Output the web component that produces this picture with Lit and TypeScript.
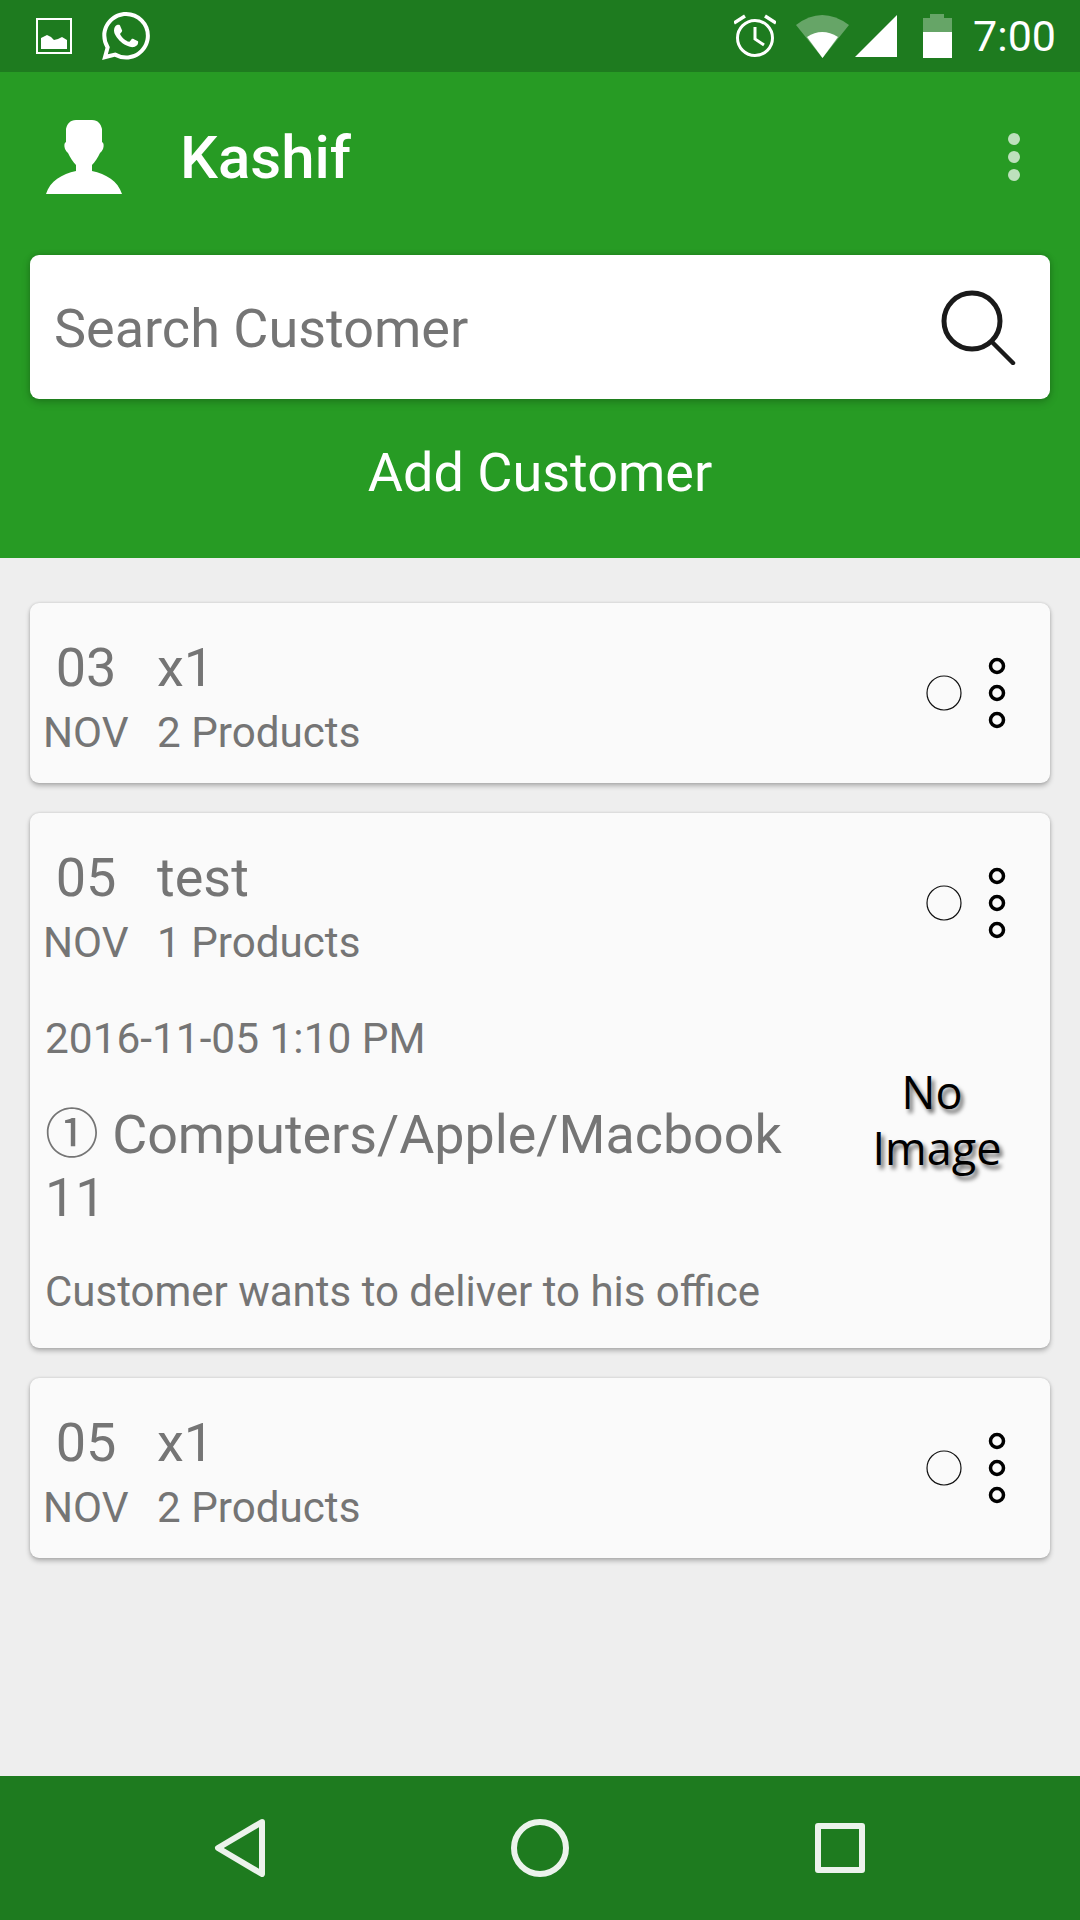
import { css, html, LitElement, svg } from 'lit';
import { customElement } from 'lit/decorators.js';

interface Order {
  day: string;
  month: string;
  name: string;
  products: string;
  expanded?: boolean;
}

const ORDERS: Order[] = [
  { day: '03', month: 'NOV', name: 'x1', products: '2 Products' },
  { day: '05', month: 'NOV', name: 'test', products: '1 Products', expanded: true },
  { day: '05', month: 'NOV', name: 'x1', products: '2 Products' },
];

const WHATSAPP = 'M17.472 14.382c-.297-.149-1.758-.867-2.03-.967-.273-.099-.471-.148-.67.15-.197.297-.767.966-.94 1.164-.173.199-.347.223-.644.075-.297-.15-1.255-.463-2.39-1.475-.883-.788-1.48-1.761-1.653-2.059-.173-.297-.018-.458.13-.606.134-.133.298-.347.446-.52.149-.174.198-.298.298-.497.099-.198.05-.371-.025-.52-.075-.149-.669-1.612-.916-2.207-.242-.579-.487-.5-.669-.51-.173-.008-.371-.01-.57-.01-.198 0-.52.074-.792.372-.272.297-1.04 1.016-1.04 2.479 0 1.462 1.065 2.875 1.213 3.074.149.198 2.096 3.2 5.077 4.487.709.306 1.262.489 1.694.625.712.227 1.36.195 1.871.118.571-.085 1.758-.719 2.006-1.413.248-.694.248-1.289.173-1.413-.074-.124-.272-.198-.57-.347m-5.421 7.403h-.004a9.87 9.87 0 01-5.031-1.378l-.361-.214-3.741.982.998-3.648-.235-.374a9.86 9.86 0 01-1.51-5.26c.001-5.45 4.436-9.884 9.888-9.884 2.64 0 5.122 1.03 6.988 2.898a9.825 9.825 0 012.893 6.994c-.003 5.45-4.437 9.884-9.885 9.884m8.413-18.297A11.815 11.815 0 0012.05 0C5.495 0 .16 5.335.157 11.892c0 2.096.547 4.142 1.588 5.945L.057 24l6.305-1.654a11.882 11.882 0 005.683 1.448h.005c6.554 0 11.89-5.335 11.893-11.893a11.821 11.821 0 00-3.48-8.413z';

@customElement('app-root')
export class AppRoot extends LitElement {
  static styles = css`
    :host {
      display: flex;
      flex-direction: column;
      height: 1920px;
      background: #eeeeee;
      font-family: Roboto, sans-serif;
      color: #757575;
    }
    svg {
      display: block;
      flex: none;
    }
    .status {
      height: 72px;
      display: flex;
      align-items: center;
      padding: 0 24px 0 36px;
      background: #1e7b1f;
      color: #fff;
    }
    .status .whatsapp {
      margin-left: 30px;
    }
    .status .right {
      margin-left: auto;
      display: flex;
      align-items: center;
    }
    .status .wifi {
      margin-left: 20px;
    }
    .status .signal {
      margin-left: 6px;
    }
    .status .battery {
      margin-left: 26px;
    }
    .time {
      margin-left: 21px;
      font-size: 43px;
      line-height: 72px;
    }
    .header {
      height: 486px;
      box-sizing: border-box;
      background: #279b24;
      padding: 0 30px;
      color: #fff;
    }
    .toolbar {
      height: 170px;
      display: flex;
      align-items: center;
      padding-left: 16px;
      margin-bottom: 13px;
    }
    .title {
      margin-left: 58px;
      font-size: 60px;
      font-weight: 500;
    }
    .overflow {
      margin-left: auto;
      margin-right: 30px;
    }
    .search {
      height: 144px;
      display: flex;
      align-items: center;
      padding: 0 34px 0 24px;
      background: #fff;
      border-radius: 9px;
      box-shadow: 0 3px 8px rgba(0, 0, 0, 0.22), 0 -1px 5px rgba(0, 0, 0, 0.1);
      color: #757575;
      font-size: 54px;
    }
    .search span {
      padding-top: 3px;
    }
    .search svg {
      margin-left: auto;
    }
    .add {
      height: 147px;
      display: flex;
      align-items: center;
      justify-content: center;
      font-size: 54px;
    }
    .list {
      flex: 1;
      display: flex;
      flex-direction: column;
      gap: 30px;
      padding: 45px 30px 0;
    }
    .card {
      background: #fafafa;
      border-radius: 9px;
      box-shadow: 0 3px 5px rgba(0, 0, 0, 0.25), 0 0 3px rgba(0, 0, 0, 0.14);
    }
    .head {
      height: 180px;
      display: flex;
      align-items: center;
      padding: 0 44px 0 13px;
    }
    .summary {
      display: grid;
      grid-template-columns: 84px auto;
      column-gap: 30px;
      margin-top: 13px;
      line-height: 65px;
    }
    .big {
      font-size: 54px;
    }
    .day {
      padding-left: 2px;
    }
    .small {
      font-size: 42.2px;
    }
    .center {
      text-align: center;
    }
    .actions {
      margin-left: auto;
      display: flex;
      align-items: center;
      gap: 26px;
    }
    .detail {
      display: flex;
      padding: 0 18px 34px 15px;
    }
    .detail-text {
      flex: 1;
      min-width: 0;
    }
    .stamp {
      margin-top: 24px;
      font-size: 42.4px;
      line-height: 44px;
    }
    .product {
      margin-top: 42px;
      font-family: Roboto, "Noto Sans CJK JP", sans-serif;
      font-size: 53.8px;
      line-height: 63px;
    }
    .note {
      margin-top: 41px;
      font-size: 42px;
      line-height: 44px;
    }
    .no-image {
      width: 190px;
      padding-top: 71px;
      text-align: center;
      font-family: "Open Sans", sans-serif;
      font-size: 45px;
      line-height: 56px;
      color: #000;
      text-shadow: 3px 4px 4px rgba(0, 0, 0, 0.6);
    }
    .no-image span {
      display: block;
      padding-right: 10px;
    }
    .nav {
      height: 144px;
      background: #1e7b1f;
      display: flex;
      align-items: center;
      padding-left: 214px;
    }
    .nav .home {
      margin-left: 245px;
    }
    .nav .recents {
      margin-left: 246px;
    }
  `;

  private _renderActions() {
    return html`
      <div class="actions">
        <svg width="36" height="36" viewBox="0 0 36 36"><circle cx="18" cy="18" r="17" fill="none" stroke="#111" stroke-width="1.2"/></svg>
        <svg width="18" height="72" viewBox="0 0 18 72" fill="none" stroke="#000" stroke-width="3.5">
          <circle cx="9" cy="9" r="6.5"/>
          <circle cx="9" cy="36" r="6.5"/>
          <circle cx="9" cy="63" r="6.5"/>
        </svg>
      </div>
    `;
  }

  private _renderOrder(order: Order) {
    return html`
      <div class="card">
        <div class="head">
          <div class="summary">
            <div class="big center day">${order.day}</div>
            <div class="big">${order.name}</div>
            <div class="small center">${order.month}</div>
            <div class="small">${order.products}</div>
          </div>
          ${this._renderActions()}
        </div>
        ${order.expanded ? html`
          <div class="detail">
            <div class="detail-text">
              <div class="stamp">2016-11-05 1:10 PM</div>
              <div class="product">① Computers/Apple/Macbook 11</div>
              <div class="note">Customer wants to deliver to his office</div>
            </div>
            <div class="no-image"><span>No</span>Image</div>
          </div>
        ` : ''}
      </div>
    `;
  }

  private _renderStatus() {
    return html`
      <div class="status">
        <svg width="36" height="36" viewBox="0 0 36 36">
          <rect x="1" y="1" width="34" height="34" fill="none" stroke="#fff" stroke-width="2"/>
          <path fill="#fff" d="M5 31V20l6-3 4 2 3 3 4-1 4-2 5 3v9z"/>
        </svg>
        <svg class="whatsapp" width="48" height="48" viewBox="0 0 24 24" fill="#fff">${svg`<path d=${WHATSAPP}/>`}</svg>
        <div class="right">
          <svg width="42" height="44" viewBox="0 0 42 44" fill="none" stroke="#fff">
            <circle cx="21" cy="24" r="17.5" stroke-width="3"/>
            <path d="M21 13v12l9 6" stroke-width="3"/>
            <path d="M0 9 11 2M42 9 31 2" stroke-width="3.5"/>
          </svg>
          <svg class="wifi" width="53" height="43" viewBox="0 0 53 43" fill="#fff">
            <path opacity="0.32" d="M0 10Q26-10 53 10L26.500 43z"/>
            <path d="M11 22Q26 12 42 22L26.500 43z"/>
          </svg>
          <svg class="signal" width="42" height="42" viewBox="0 0 42 42" fill="#fff"><path d="M0 42 42 0v42z"/></svg>
          <svg class="battery" width="29" height="44" viewBox="0 0 29 44" fill="#fff">
            <path opacity="0.32" d="M7 0h14v4h8v14H0V4h7z"/>
            <path d="M0 18h29v26H0z"/>
          </svg>
          <div class="time">7:00</div>
        </div>
      </div>
    `;
  }

  render() {
    return html`
      ${this._renderStatus()}
      <div class="header">
        <div class="toolbar">
          <svg width="76" height="74" viewBox="0 0 76 74" fill="#fff">
            <path d="M30 0h16c6 0 9 4 10 9v13c2 1 2 4 1 7-1 2-2 3-3 4-2 4-5 9-8 12v6c14 3 26 10 30 23H0c4-13 16-20 30-23v-6c-3-3-6-8-8-12-1-1-2-2-3-4-1-3-1-6 1-7V9c1-5 4-9 10-9z"/>
          </svg>
          <div class="title">Kashif</div>
          <svg class="overflow" width="12" height="48" viewBox="0 0 12 48" fill="#fff" fill-opacity="0.7">
            <circle cx="6" cy="6" r="6"/><circle cx="6" cy="24" r="6"/><circle cx="6" cy="42" r="6"/>
          </svg>
        </div>
        <div class="search">
          <span>Search Customer</span>
          <svg width="76" height="76" viewBox="0 0 76 76" fill="none" stroke="#1a1a1a" stroke-linecap="round">
            <circle cx="32" cy="32" r="28" stroke-width="5"/>
            <path d="M52 53 73 74" stroke-width="4.500"/>
          </svg>
        </div>
        <div class="add">Add Customer</div>
      </div>
      <div class="list">${ORDERS.map(order => this._renderOrder(order))}</div>
      <div class="nav">
        <svg width="52" height="58" viewBox="0 0 52 58" fill="none" stroke="#ecf3ec" stroke-width="6" stroke-linejoin="round">
          <path d="M48 3 4 29l44 26z"/>
        </svg>
        <svg class="home" width="58" height="58" viewBox="0 0 58 58" fill="none" stroke="#ecf3ec" stroke-width="6">
          <circle cx="29" cy="29" r="26"/>
        </svg>
        <svg class="recents" width="50" height="50" viewBox="0 0 50 50" fill="none" stroke="#ecf3ec" stroke-width="6" stroke-linejoin="round">
          <rect x="3" y="3" width="44" height="44"/>
        </svg>
      </div>
    `;
  }
}
